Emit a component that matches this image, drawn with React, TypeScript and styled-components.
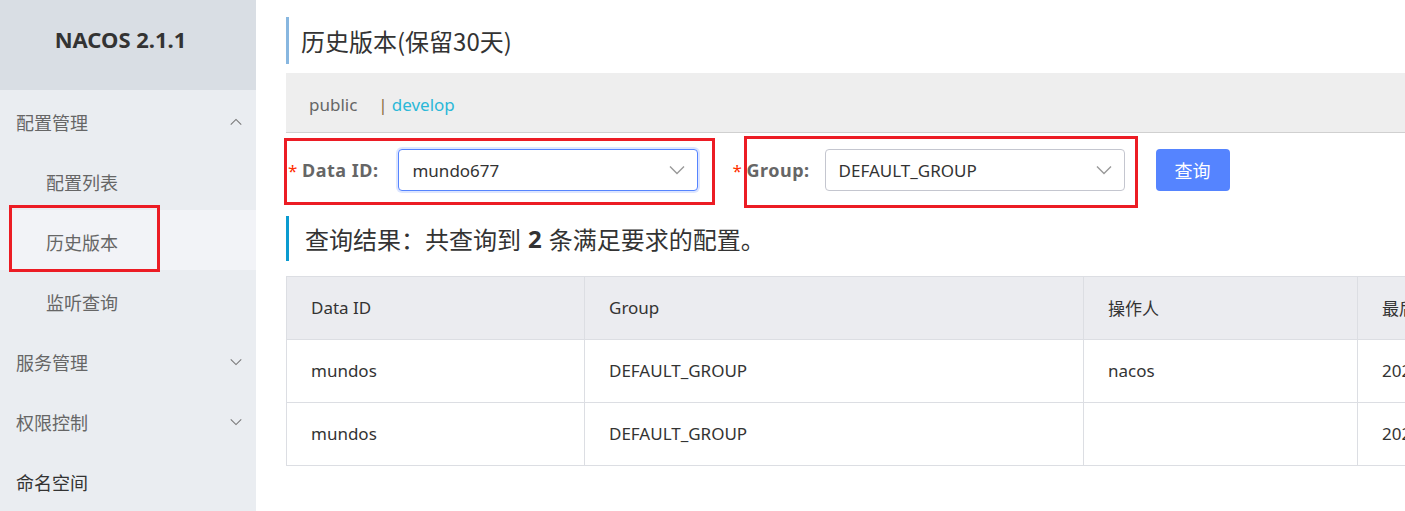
import React from "react";
import styled, { createGlobalStyle } from "styled-components";

const GlobalStyle = createGlobalStyle`
  html, body {
    margin: 0;
    padding: 0;
    background: #fff;
  }
  body {
    font-family: "Noto Sans", "Noto Sans CJK SC", sans-serif;
    color: #333;
  }
`;

const Page = styled.div`
  display: flex;
  width: 1405px;
  height: 511px;
  overflow: hidden;
`;

const Sidebar = styled.div`
  flex: 0 0 256px;
  background: #eaedf1;
  display: flex;
  flex-direction: column;
`;

const Brand = styled.div`
  height: 90px;
  background: #d9dee4;
  display: flex;
  align-items: center;
  justify-content: center;
  padding-right: 15px;
  padding-bottom: 12px;
  box-sizing: border-box;
  font-size: 22px;
  font-weight: 700;
  color: #333;
`;

const MenuItem = styled.div<{ $sub?: boolean; $active?: boolean; $dark?: boolean }>`
  position: relative;
  height: 60px;
  display: flex;
  align-items: center;
  justify-content: space-between;
  padding: 4px 14px 0 ${(p) => (p.$sub ? 46 : 16)}px;
  box-sizing: border-box;
  background: ${(p) => (p.$active ? "#f2f3f7" : "transparent")};
  font-family: "Noto Sans CJK SC", sans-serif;
  font-size: 18px;
  color: ${(p) => (p.$dark ? "#333" : "#666")};
`;

const Mark = styled.span<{ $l: number; $t: number; $r: number; $b: number }>`
  position: absolute;
  left: ${(p) => p.$l}px;
  top: ${(p) => p.$t}px;
  right: ${(p) => p.$r}px;
  bottom: ${(p) => p.$b}px;
  border: 3px solid #ec1c24;
  pointer-events: none;
`;

const Main = styled.div`
  flex: 1;
  min-width: 0;
  overflow: hidden;
  padding-left: 30px;
`;

const Title = styled.div`
  margin-top: 17px;
  height: 47px;
  border-left: 3px solid #88b7e0;
  padding-left: 12px;
  display: flex;
  align-items: center;
  font-family: "Noto Sans CJK SC", sans-serif;
  font-size: 24px;
  color: #333;
`;

const NsBar = styled.div`
  margin-top: 9px;
  height: 60px;
  background: #eeeeee;
  border-bottom: 1px solid #d0d0d0;
  display: flex;
  align-items: center;
  padding: 4px 0 0 23px;
  box-sizing: border-box;
  font-size: 17px;
  color: #666;
`;

const NsLink = styled.span<{ $current?: boolean }>`
  color: ${(p) => (p.$current ? "#2bb8d8" : "#666")};
`;

const NsSep = styled.span`
  color: #8b6b3d;
  margin: 0 4px 0 21px;
`;

const FormRow = styled.div`
  margin-top: 16px;
  height: 42px;
  display: flex;
  align-items: center;
`;

const Field = styled.div<{ $offset?: number }>`
  position: relative;
  display: flex;
  align-items: center;
  margin-left: ${(p) => p.$offset ?? 0}px;
`;

const Star = styled.span`
  color: #ff3000;
  font-size: 17px;
  width: 16px;
  padding-left: 2px;
  box-sizing: border-box;
`;

const Label = styled.label<{ $gap: number }>`
  font-size: 18px;
  font-weight: 700;
  letter-spacing: 0.5px;
  color: #666;
  margin-right: ${(p) => p.$gap}px;
`;

const Select = styled.div<{ $focus?: boolean }>`
  width: 300px;
  height: 42px;
  box-sizing: border-box;
  border: 1px solid ${(p) => (p.$focus ? "#5584ff" : "#c4c6cf")};
  box-shadow: ${(p) => (p.$focus ? "0 0 0 2px rgba(85,132,255,0.2)" : "none")};
  border-radius: 4px;
  background: #fff;
  display: flex;
  align-items: center;
  justify-content: space-between;
  padding: 0 12px 0 13px;
  font-size: 17px;
  color: #333;
`;

const QueryButton = styled.button`
  margin-left: 31px;
  width: 74px;
  height: 42px;
  border: none;
  border-radius: 4px;
  background: #5584ff;
  color: #fff;
  font-family: "Noto Sans CJK SC", sans-serif;
  font-size: 18px;
  padding: 0;
`;

const Result = styled.div`
  margin-top: 25px;
  height: 45px;
  border-left: 3px solid #0a9bd0;
  padding-left: 16px;
  display: flex;
  align-items: center;
  font-family: "Noto Sans CJK SC", sans-serif;
  font-size: 24px;
  color: #333;
  b {
    font-family: "Noto Sans", sans-serif;
    font-weight: 700;
    margin: 0 7px;
  }
`;

const Table = styled.table`
  margin-top: 15px;
  border-collapse: collapse;
  table-layout: fixed;
  width: 1400px;
  font-size: 17px;
  color: #333;
`;

const Th = styled.th<{ $w: number }>`
  box-sizing: border-box;
  width: ${(p) => p.$w}px;
  height: 63px;
  background: #ebecf0;
  border: 1px solid #dcdee3;
  text-align: left;
  font-weight: 400;
  padding: 0 0 1px 24px;
  white-space: nowrap;
  overflow: hidden;
  font-family: "Noto Sans", "Noto Sans CJK SC", sans-serif;
`;

const Td = styled.td`
  box-sizing: border-box;
  height: 63px;
  border: 1px solid #dcdee3;
  padding: 0 0 2px 24px;
  white-space: nowrap;
  overflow: hidden;
`;

const Chevron = ({ up, w = 16, color = "#999" }: { up?: boolean; w?: number; color?: string }) => (
  <svg width={w} height={w / 2 + 2} viewBox="0 0 16 9" fill="none">
    <polyline
      points={up ? "1,8 8,1 15,8" : "1,1 8,8 15,1"}
      stroke={color}
      strokeWidth="1.4"
    />
  </svg>
);

const rows = [
  { id: "mundos", group: "DEFAULT_GROUP", user: "nacos", time: "2022-09-18 16:20:11" },
  { id: "mundos", group: "DEFAULT_GROUP", user: "", time: "2022-09-18 16:19:45" },
];

export default function App() {
  return (
    <Page>
      <GlobalStyle />
      <Sidebar>
        <Brand>NACOS 2.1.1</Brand>
        <MenuItem>
          配置管理 <Chevron up w={12} color="#777" />
        </MenuItem>
        <MenuItem $sub>配置列表</MenuItem>
        <MenuItem $sub $active>
          历史版本
          <Mark $l={9} $t={-5} $r={96} $b={-2} />
        </MenuItem>
        <MenuItem $sub>监听查询</MenuItem>
        <MenuItem>
          服务管理 <Chevron w={12} color="#777" />
        </MenuItem>
        <MenuItem>
          权限控制 <Chevron w={12} color="#777" />
        </MenuItem>
        <MenuItem $dark>命名空间</MenuItem>
      </Sidebar>

      <Main>
        <Title>历史版本(保留30天)</Title>
        <NsBar>
          <NsLink>public</NsLink>
          <NsSep>|</NsSep>
          <NsLink $current>develop</NsLink>
        </NsBar>

        <FormRow>
          <Field>
            <Star>*</Star>
            <Label $gap={20}>Data ID:</Label>
            <Select $focus>
              mundo677
              <Chevron />
            </Select>
            <Mark $l={-2} $t={-11} $r={-17} $b={-14} />
          </Field>
          <Field $offset={32}>
            <Star>*</Star>
            <Field>
              <Label $gap={15}>Group:</Label>
              <Select>
                DEFAULT_GROUP
                <Chevron />
              </Select>
              <Mark $l={-2} $t={-13} $r={-13} $b={-17} />
            </Field>
          </Field>
          <QueryButton>查询</QueryButton>
        </FormRow>

        <Result>
          查询结果：共查询到<b>2</b>条满足要求的配置。
        </Result>

        <Table>
          <thead>
            <tr>
              <Th $w={298}>Data ID</Th>
              <Th $w={499}>Group</Th>
              <Th $w={274}>操作人</Th>
              <Th $w={329}>最后更新时间</Th>
            </tr>
          </thead>
          <tbody>
            {rows.map((r, i) => (
              <tr key={i}>
                <Td>{r.id}</Td>
                <Td>{r.group}</Td>
                <Td>{r.user}</Td>
                <Td>{r.time}</Td>
              </tr>
            ))}
          </tbody>
        </Table>
      </Main>
    </Page>
  );
}
